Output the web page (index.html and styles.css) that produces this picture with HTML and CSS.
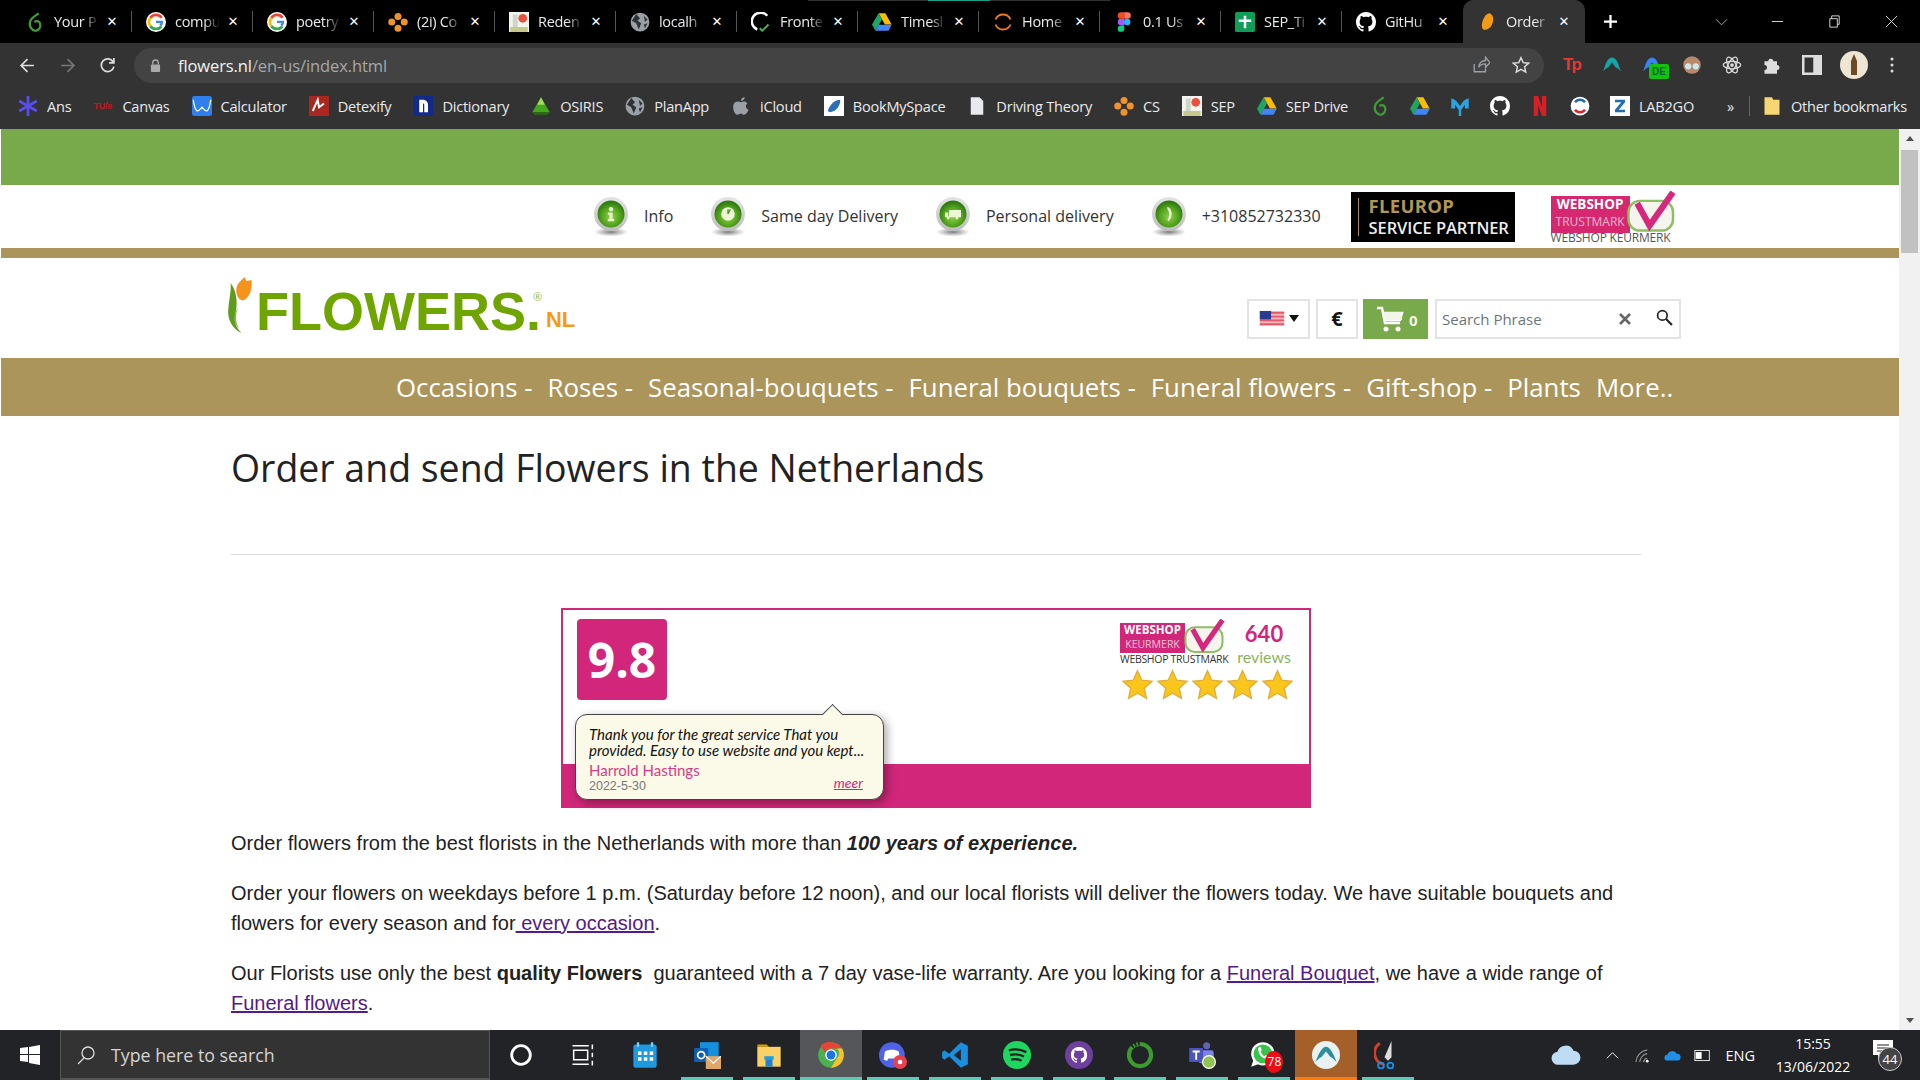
FILE: index.html
```html
<!DOCTYPE html>
<html lang="en">
<head>
    <meta charset="UTF-8">
    <meta name="viewport" content="width=device-width, initial-scale=1.0">
    <title>Order and send Flowers in the Netherlands</title>
    <link rel="stylesheet" href="styles.css">
</head>
<body>
    <svg class="defs" width="0" height="0">
        <defs>
            <radialGradient id="ball-green" cx="50%" cy="60%" r="55%"><stop offset="0" stop-color="#8fd04a"/><stop offset="0.6" stop-color="#55a51f"/><stop offset="1" stop-color="#2f7a12"/></radialGradient>
            <radialGradient id="ball-shadow" cx="50%" cy="50%" r="50%"><stop offset="0" stop-color="#7a7a7a"/><stop offset="1" stop-color="#8a8a8a" stop-opacity="0"/></radialGradient>
            <linearGradient id="ball-rim" x1="0" y1="0" x2="0" y2="1"><stop offset="0" stop-color="#e4e4e4"/><stop offset="1" stop-color="#bdbdbd"/></linearGradient>
        </defs>
        <symbol id="i-leaf-green" viewBox="0 0 16 16"><path d="M11 1C9 3 5 4 4 8c-1 4 2 7 4.500 7S13 12 12 9C11 7 9 7 7.500 8" fill="none" stroke="#3f9b34" stroke-width="1.800"/></symbol>
        <symbol id="i-google" viewBox="0 0 16 16"><circle cx="8" cy="8" r="8" fill="#fff"/><path d="M12.500 4.600A5.600 5.600 0 0 0 3.500 4.700" fill="none" stroke="#ea4335" stroke-width="2.200"/><path d="M3.500 4.700a5.600 5.600 0 0 0 0 6.600" fill="none" stroke="#fbbc05" stroke-width="2.200"/><path d="M3.500 11.300a5.600 5.600 0 0 0 8.800.3" fill="none" stroke="#34a853" stroke-width="2.200"/><path d="M8 7h5.600c.2 2-.3 3.500-1.300 4.600L10.700 10c.5-.4.800-.9.900-1.300H8z" fill="#4285f4"/></symbol>
        <symbol id="i-dots" viewBox="0 0 16 16"><g fill="#f0932b"><circle cx="8" cy="3.500" r="2.800"/><circle cx="3" cy="8" r="2.800"/><circle cx="13" cy="8" r="2.800"/><circle cx="8" cy="13" r="2.800"/></g></symbol>
        <symbol id="i-photo" viewBox="0 0 16 16"><rect width="16" height="16" fill="#f4f4ef"/><rect x="3" y="2" width="4" height="11" fill="#cfd6c9"/><circle cx="11" cy="5" r="3.500" fill="#e8503f"/><rect x="1" y="12" width="14" height="4" fill="#c4c98e"/></symbol>
        <symbol id="i-globe" viewBox="0 0 16 16"><circle cx="8" cy="8" r="7.500" fill="#9aa0a6"/><path d="M5 1.500 8 5 6 7 9 9 7 14 5 9 1.500 7zM11 3l3 3-2 2zM11 10l3-1-2 4z" fill="#303134"/></symbol>
        <symbol id="i-drive" viewBox="0 0 16 16"><path d="M5.300 1h5.400l5 9h-5.400z" fill="#fbbc05"/><path d="M5.300 1 0 10l2.700 5L8 6z" fill="#1fa463"/><path d="M5.300 10.200h10.400L13.200 15H2.800z" fill="#4285f4"/></symbol>
        <symbol id="i-github" viewBox="0 0 16 16"><path fill="#fff" d="M8 0C3.580 0 0 3.580 0 8c0 3.540 2.290 6.530 5.470 7.590.4.070.55-.17.55-.38 0-.19-.01-.82-.01-1.490-2.010.37-2.530-.49-2.690-.94-.09-.23-.48-.94-.82-1.130-.28-.15-.68-.52-.01-.53.63-.01 1.080.58 1.230.82.72 1.210 1.870.87 2.330.66.07-.52.28-.87.51-1.070-1.780-.2-3.640-.89-3.640-3.950 0-.87.31-1.590.82-2.150-.08-.2-.36-1.020.08-2.120 0 0 .67-.21 2.200.82.64-.18 1.320-.27 2-.27.68 0 1.360.09 2 .27 1.530-1.040 2.200-.82 2.200-.82.44 1.100.16 1.920.08 2.120.51.56.82 1.270.82 2.150 0 3.070-1.870 3.750-3.650 3.950.29.25.54.73.54 1.480 0 1.070-.01 1.930-.01 2.200 0 .21.15.46.55.38A8.013 8.013 0 0 0 16 8c0-4.420-3.580-8-8-8z"/></symbol>
        <symbol id="i-ci" viewBox="0 0 16 16"><path d="M13 3A7 7 0 1 0 5 14" fill="none" stroke="#fff" stroke-width="2"/><path d="M7 13l2 2 5-5" fill="none" stroke="#3fb950" stroke-width="1.500"/></symbol>
        <symbol id="i-arcs" viewBox="0 0 16 16"><path d="M2 6a6.500 6.500 0 0 1 12 0" fill="none" stroke="#f47b20" stroke-width="1.500"/><path d="M2 10a6.500 6.500 0 0 0 12 0" fill="none" stroke="#f47b20" stroke-width="1.500"/></symbol>
        <symbol id="i-figma" viewBox="0 0 16 16"><circle cx="10.500" cy="8" r="2.600" fill="#1abcfe"/><path d="M3 13.300A2.600 2.600 0 0 1 5.600 10.700h2.600v2.600a2.600 2.600 0 0 1-5.200 0z" fill="#0acf83"/><path d="M3 8a2.600 2.600 0 0 1 2.600-2.600h2.600v5.200H5.600A2.600 2.600 0 0 1 3 8z" fill="#a259ff"/><path d="M3 2.700A2.600 2.600 0 0 1 5.600.1h2.600v5.300H5.600A2.600 2.600 0 0 1 3 2.700z" fill="#f24e1e"/><path d="M8.200.1h2.600a2.600 2.600 0 0 1 0 5.300H8.200z" fill="#ff7262"/></symbol>
        <symbol id="i-sheets" viewBox="0 0 16 16"><rect width="16" height="16" rx="1.500" fill="#0f9d58"/><path d="M7 3h2v3h4v2H9v5H7V8H3V6h4z" fill="#fff"/></symbol>
        <symbol id="i-tulip" viewBox="0 0 16 16"><path d="M10 1c3 1 4 5 2 9-1 3-5 5-7 4-2-2-1-7 1-10 1-2 3-3 4-3z" fill="#f59a16"/></symbol>
        <symbol id="i-star" viewBox="0 0 24 24"><path d="M12 2l3 6.600 7.200.8-5.400 4.900 1.500 7.100L12 17.800 5.700 21.400l1.500-7.100L1.800 9.400 9 8.600z" fill="#fac61b" stroke="#e2ae3a" stroke-width="1"/></symbol>
        <symbol id="i-ball" viewBox="0 0 36 40"><ellipse cx="18" cy="35" rx="17" ry="4.500" fill="url(#ball-shadow)"/><circle cx="18" cy="17" r="17" fill="url(#ball-rim)"/><circle cx="18" cy="17" r="13.500" fill="url(#ball-green)"/></symbol>
        <symbol id="i-cart" viewBox="0 0 28 26"><path d="M1 2h5l3 15h15M7 7h19l-2 7H9" fill="none" stroke="#fff" stroke-width="2.500"/><path d="M8 6h18v8H9z" fill="#f2f6e8"/><circle cx="10" cy="23" r="2.500" fill="#fff"/><circle cx="22" cy="23" r="2.500" fill="#fff"/></symbol>
    </svg>

    <div class="tabbar">
        <div class="tab"><svg class="fav"><use href="#i-leaf-green"/></svg><span class="tab-title">Your P</span><span class="tab-x">&#10005;</span></div>
        <div class="tab"><svg class="fav"><use href="#i-google"/></svg><span class="tab-title">compu</span><span class="tab-x">&#10005;</span></div>
        <div class="tab"><svg class="fav"><use href="#i-google"/></svg><span class="tab-title">poetry</span><span class="tab-x">&#10005;</span></div>
        <div class="tab"><svg class="fav"><use href="#i-dots"/></svg><span class="tab-title">(2i) Co</span><span class="tab-x">&#10005;</span></div>
        <div class="tab"><svg class="fav"><use href="#i-photo"/></svg><span class="tab-title">Reden</span><span class="tab-x">&#10005;</span></div>
        <div class="tab"><svg class="fav"><use href="#i-globe"/></svg><span class="tab-title">localh</span><span class="tab-x">&#10005;</span></div>
        <div class="tab"><svg class="fav"><use href="#i-ci"/></svg><span class="tab-title">Fronte</span><span class="tab-x">&#10005;</span></div>
        <div class="tab"><svg class="fav"><use href="#i-drive"/></svg><span class="tab-title">Timesl</span><span class="tab-x">&#10005;</span></div>
        <div class="tab"><svg class="fav"><use href="#i-arcs"/></svg><span class="tab-title">Home</span><span class="tab-x">&#10005;</span></div>
        <div class="tab"><svg class="fav"><use href="#i-figma"/></svg><span class="tab-title">0.1 Us</span><span class="tab-x">&#10005;</span></div>
        <div class="tab"><svg class="fav"><use href="#i-sheets"/></svg><span class="tab-title">SEP_Ti</span><span class="tab-x">&#10005;</span></div>
        <div class="tab tab-last"><svg class="fav"><use href="#i-github"/></svg><span class="tab-title">GitHu</span><span class="tab-x">&#10005;</span></div>
        <div class="tab tab-active"><svg class="fav"><use href="#i-tulip"/></svg><span class="tab-title">Order</span><span class="tab-x">&#10005;</span></div>
        <svg class="new-tab" viewBox="0 0 16 16"><path d="M8 1v14M1 8h14" stroke="#fff" stroke-width="2.400"/></svg>
        <div class="win-controls">
            <svg class="win-chevron" viewBox="0 0 14 8"><path d="M1 1l6 6 6-6" fill="none" stroke="#aaa"/></svg>
            <svg class="win-btn" viewBox="0 0 16 16"><path d="M2 8h12" stroke="#ddd"/></svg>
            <svg class="win-btn" viewBox="0 0 16 16"><path d="M3 5h8v9H3zM5 5V2h8v9h-2" fill="none" stroke="#ddd"/></svg>
            <svg class="win-btn" viewBox="0 0 16 16"><path d="M2 2l12 12M14 2L2 14" stroke="#ddd"/></svg>
        </div>
    </div>

    <div class="toolbar">
        <svg class="nav-icon" viewBox="0 0 16 16"><path d="M14 8H2M8 2L2 8l6 6" fill="none" stroke="#ddd" stroke-width="1.600"/></svg>
        <svg class="nav-icon" viewBox="0 0 16 16"><path d="M2 8h12M8 2l6 6-6 6" fill="none" stroke="#777" stroke-width="1.600"/></svg>
        <svg class="nav-icon" viewBox="0 0 16 16"><path d="M13.500 5A6 6 0 1 0 14 9M14 1v4.500H9.500" fill="none" stroke="#ddd" stroke-width="1.600"/></svg>
        <div class="omnibox">
            <svg class="lock" viewBox="0 0 12 14"><path d="M3 6V4a3 3 0 0 1 6 0v2" fill="none" stroke="#aaa" stroke-width="1.400"/><rect x="1" y="6" width="10" height="8" rx="1" fill="#aaa"/></svg>
            <span class="url">flowers.nl<span class="url-path">/en-us/index.html</span></span>
            <svg class="omni-icon" viewBox="0 0 16 16"><path d="M2 7v7h10v-3M6 10c0-4 3-6 6-6V1l4 5-4 4V7c-3 0-5 1-6 3z" fill="none" stroke="#9aa0a6" stroke-width="1.200"/></svg>
            <svg class="omni-icon" viewBox="0 0 16 16"><path d="M8 1.500l2 4.400 4.800.5-3.600 3.200 1 4.700L8 11.900l-4.200 2.400 1-4.700L1.200 6.400 6 5.900z" fill="none" stroke="#ddd" stroke-width="1.300"/></svg>
        </div>
        <div class="extensions">
            <span class="ext-tp">Tp</span>
            <svg class="ext" viewBox="0 0 16 16"><path d="M1 13C3 6 5 2 8 2s5 4 7 11c-2-2-3-3-4-3L8 6l-3 4c-1 0-2 1-4 3z" fill="#18a5a7"/></svg>
            <span class="ext-wrap"><svg class="ext" viewBox="0 0 16 16"><path d="M1 13C3 6 5 2 8 2s5 4 7 11c-2-2-3-3-4-3L8 6l-3 4c-1 0-2 1-4 3z" fill="#3b82f6"/></svg><span class="ext-de">DE</span></span>
            <svg class="ext" viewBox="0 0 16 16"><circle cx="8" cy="8" r="7" fill="#b78a6b"/><circle cx="5" cy="9" r="2.500" fill="#cfe7ea"/><circle cx="11" cy="9" r="2.500" fill="#cfe7ea"/></svg>
            <svg class="ext" viewBox="0 0 16 16"><g fill="none" stroke="#ddd"><ellipse cx="8" cy="8" rx="7" ry="3"/><ellipse cx="8" cy="8" rx="7" ry="3" transform="rotate(60 8 8)"/><ellipse cx="8" cy="8" rx="7" ry="3" transform="rotate(120 8 8)"/></g><circle cx="8" cy="8" r="1.500" fill="#ddd"/></svg>
            <svg class="ext" viewBox="0 0 16 16"><path d="M2 5h3a2 2 0 1 1 4 0h3v3a2 2 0 1 1 0 4v3H2v-3a2 2 0 1 0 0-4z" fill="#ddd"/></svg>
            <svg class="ext" viewBox="0 0 16 16"><path d="M1 1h14v14H1z" fill="none" stroke="#ddd" stroke-width="2"/><rect x="9" y="1" width="6" height="14" fill="#ddd"/></svg>
            <svg class="avatar" viewBox="0 0 28 28"><circle cx="14" cy="14" r="14" fill="#eee6d2"/><path d="M11 24V10l3-7 3 7v14z" fill="#6b4a2a"/></svg>
            <svg class="ext-menu" viewBox="0 0 4 16"><g fill="#ddd"><circle cx="2" cy="2" r="1.500"/><circle cx="2" cy="8" r="1.500"/><circle cx="2" cy="14" r="1.500"/></g></svg>
        </div>
    </div>

    <div class="bookmarks">
        <span class="bm"><svg class="fav" viewBox="0 0 16 16"><path d="M8 0v16M1 4l14 8M15 4L1 12" stroke="#5a4df0" stroke-width="2.200"/></svg>Ans</span>
        <span class="bm"><span class="bm-tue">TU/e</span>Canvas</span>
        <span class="bm"><svg class="fav" viewBox="0 0 16 16"><rect width="16" height="16" rx="2" fill="#2f80ed"/><path d="M1 3c2 14 5 8 7 6 2 2 5 8 7-6" fill="none" stroke="#fff"/></svg>Calculator</span>
        <span class="bm"><svg class="fav" viewBox="0 0 16 16"><rect width="16" height="16" fill="#a8281f"/><path d="M3 12l4-9 1 6 4-3" fill="none" stroke="#fff" stroke-width="1.500"/></svg>Detexify</span>
        <span class="bm"><svg class="fav" viewBox="0 0 16 16"><rect width="16" height="16" fill="#122a8a"/><path d="M5 3h3a4 4 0 0 1 4 4v6H9V7a1 1 0 0 0-1-1v7H5z" fill="#fff"/></svg>Dictionary</span>
        <span class="bm"><svg class="fav" viewBox="0 0 16 16"><path d="M8 1l7 12H1z" fill="#43a81c"/><path d="M8 1l3 6H5z" fill="#9fdc5a"/><path d="M1 13h14l-2 2H3z" fill="#2a6d10"/></svg>OSIRIS</span>
        <span class="bm"><svg class="fav"><use href="#i-globe"/></svg>PlanApp</span>
        <span class="bm"><svg class="fav" viewBox="0 0 16 16"><path d="M11 1c0 2-2 3-3 3 0-2 1-3 3-3zM8 5c2-1 4-1 5 1-2 2-1 4 1 5-1 3-3 4-4 4s-1-1-2-1-2 1-3 1c-2 0-4-5-3-8 1-3 4-3 6-2z" fill="#9aa0a6"/></svg>iCloud</span>
        <span class="bm"><svg class="fav" viewBox="0 0 16 16"><rect width="16" height="16" fill="#fff"/><path d="M3 12C5 6 9 3 13 3c0 5-3 9-8 10z" fill="#2d6fb5"/></svg>BookMySpace</span>
        <span class="bm"><svg class="fav" viewBox="0 0 16 16"><path d="M3 1h7l3 3v11H3z" fill="#e8eaed"/></svg>Driving Theory</span>
        <span class="bm"><svg class="fav"><use href="#i-dots"/></svg>CS</span>
        <span class="bm"><svg class="fav"><use href="#i-photo"/></svg>SEP</span>
        <span class="bm"><svg class="fav"><use href="#i-drive"/></svg>SEP Drive</span>
        <span class="bm bm-icon"><svg class="fav"><use href="#i-leaf-green"/></svg></span>
        <span class="bm bm-icon"><svg class="fav"><use href="#i-drive"/></svg></span>
        <span class="bm bm-icon"><svg class="fav" viewBox="0 0 16 16"><path d="M1 2c3 0 5 3 7 6 2-3 4-6 7-6v8h-3V7l-3 4v5H7v-5L4 7v3H1z" fill="#2aa3e0"/></svg></span>
        <span class="bm bm-icon"><svg class="fav"><use href="#i-github"/></svg></span>
        <span class="bm bm-icon"><svg class="fav" viewBox="0 0 16 16"><path d="M3 0h3.500l3 9V0H13v16c-1 0-2.500 0-3.500-.3L6.500 7v8.700L3 16z" fill="#d81f26"/></svg></span>
        <span class="bm bm-icon"><svg class="fav" viewBox="0 0 16 16"><circle cx="8" cy="8" r="7.500" fill="#fff"/><path d="M4 5a5 5 0 0 1 8 0" fill="none" stroke="#2368b5" stroke-width="2"/><path d="M12 11a5 5 0 0 1-8 0" fill="none" stroke="#d8232a" stroke-width="2"/></svg></span>
        <span class="bm bm-lab"><svg class="fav" viewBox="0 0 16 16"><rect width="16" height="16" fill="#fff"/><path d="M4 3h8v2L7 11h5v2H4v-2l5-6H4z" fill="#1f6fb5"/></svg>LAB2GO</span>
        <span class="bm-more">&raquo;</span>
        <span class="bm-sep"></span>
        <span class="bm bm-other"><svg class="fav" viewBox="0 0 16 16"><path d="M2 1h6l1 2h5v12H2z" fill="#f7d774"/></svg>Other bookmarks</span>
    </div>

    <div class="viewport">
        <div class="page">
            <div class="green-bar"></div>
            <div class="info-row">
                <span class="info-item">
                    <span class="ball-wrap"><svg class="ball"><use href="#i-ball"/></svg><svg class="ball-glyph" viewBox="0 0 20 20"><circle cx="10" cy="4" r="2.800" fill="#e6f3c8"/><path d="M6 8h6v8h2v3H6v-3h2v-5H6z" fill="#e6f3c8"/></svg></span>
                    Info
                </span>
                <span class="info-item">
                    <span class="ball-wrap"><svg class="ball"><use href="#i-ball"/></svg><svg class="ball-glyph" viewBox="0 0 20 20"><circle cx="10" cy="10" r="8.500" fill="#eef6d8"/><path d="M10 10V4M10 10l3-6" stroke="#4f9c22" stroke-width="1.800" fill="none"/></svg></span>
                    Same day Delivery
                </span>
                <span class="info-item">
                    <span class="ball-wrap"><svg class="ball"><use href="#i-ball"/></svg><svg class="ball-glyph" viewBox="0 0 20 20"><path d="M5 5h15v9H5zM0 8h4v6H0z" fill="#eef6d8"/><circle cx="4" cy="15" r="1.800" fill="#eef6d8"/><circle cx="15" cy="15" r="1.800" fill="#eef6d8"/></svg></span>
                    Personal delivery
                </span>
                <span class="info-item">
                    <span class="ball-wrap"><svg class="ball"><use href="#i-ball"/></svg><svg class="ball-glyph" viewBox="0 0 20 20"><path d="M8 1c6 2 8 13 1 18l-1-2c3-3 3-10 0-13z" fill="#eef6d8"/></svg></span>
                    +310852732330
                </span>
                <div class="fleurop">
                    <span class="fleurop-top">FLEUROP</span>
                    <span class="fleurop-bottom">SERVICE PARTNER</span>
                </div>
                <div class="trustmark">
                    <div class="trustmark-top">
                        <div class="trustmark-pink"><b>WEBSHOP</b><span>TRUSTMARK</span></div>
                        <svg class="trustmark-check" viewBox="0 0 40 34"><rect x="1" y="8" width="36" height="24" rx="9" fill="#f5f5ee" stroke="#8cc063" stroke-width="2"/><path d="M8 10l10 18L37 1" fill="none" stroke="#d5287c" stroke-width="5"/></svg>
                    </div>
                    <div class="trustmark-bottom">WEBSHOP KEURMERK</div>
                </div>
            </div>
            <div class="gold-line"></div>

            <header class="site-header">
                <div class="logo">
                    <svg class="tulip" viewBox="0 0 26 58"><path d="M4 6c5 6 8 18 5 30-2 8 0 14 6 20C6 52 0 42 2 30 3 20 5 12 4 6z" fill="#5f9c1e"/><path d="M12 30c-4 8-3 16 1 22-6-5-7-14-1-22z" fill="#7fb63e"/><path d="M13 5l5-5 2 4 5-1c1 8-1 16-7 20-4 1-7-2-8-7-1-4 1-9 3-11z" fill="#f6931d"/></svg>
                    <span class="logo-text">FLOWERS.</span>
                    <span class="logo-reg">&reg;</span>
                    <span class="logo-nl">NL</span>
                </div>
                <div class="shop-tools">
                    <span class="tool tool-flag">
                        <svg class="flag" viewBox="0 0 26 16"><rect width="26" height="16" fill="#f4b5bd"/><path d="M0 2h26M0 6h26M0 10h26M0 14h26" stroke="#e25a68" stroke-width="2"/><rect width="12" height="9" fill="#2a3a8f"/></svg>
                        <span class="caret"></span>
                    </span>
                    <span class="tool tool-euro">&euro;</span>
                    <span class="tool-cart"><svg class="cart"><use href="#i-cart"/></svg><span class="cart-count">0</span></span>
                    <div class="search">
                        <span class="search-text">Search Phrase</span>
                        <svg class="search-x" viewBox="0 0 14 14"><path d="M2 2l10 10M12 2L2 12" stroke="#666" stroke-width="2.600"/></svg>
                        <svg class="search-go" viewBox="0 0 16 16"><circle cx="6" cy="6" r="4.500" fill="none" stroke="#222" stroke-width="1.600"/><path d="M9.500 9.500L15 15" stroke="#222" stroke-width="2"/></svg>
                    </div>
                </div>
            </header>

            <nav class="main-nav">
                <a>Occasions -</a>
                <a>Roses -</a>
                <a>Seasonal-bouquets -</a>
                <a>Funeral bouquets -</a>
                <a>Funeral flowers -</a>
                <a>Gift-shop -</a>
                <a>Plants</a>
                <a>More..</a>
            </nav>

            <main class="content">
                <h1>Order and send Flowers in the Netherlands</h1>
                <hr>
                <div class="rating">
                    <div class="rating-top">
                        <div class="score">9.8</div>
                        <div class="rating-side">
                            <div class="rating-brand">
                                <div class="keurmerk">
                                    <div class="keurmerk-top">
                                        <div class="keurmerk-pink"><b>WEBSHOP</b><span>KEURMERK</span></div>
                                        <svg class="keurmerk-check" viewBox="0 0 40 34"><rect x="1" y="8" width="36" height="24" rx="9" fill="#f5f5ee" stroke="#8cc063" stroke-width="2"/><path d="M8 10l10 18L37 1" fill="none" stroke="#d5287c" stroke-width="5"/></svg>
                                    </div>
                                    <div class="keurmerk-bottom">WEBSHOP TRUSTMARK</div>
                                </div>
                                <div class="review-count"><b>640</b><span>reviews</span></div>
                            </div>
                            <div class="stars">
                                <svg class="star"><use href="#i-star"/></svg>
                                <svg class="star"><use href="#i-star"/></svg>
                                <svg class="star"><use href="#i-star"/></svg>
                                <svg class="star"><use href="#i-star"/></svg>
                                <svg class="star"><use href="#i-star"/></svg>
                            </div>
                        </div>
                    </div>
                    <div class="rating-band"></div>
                    <div class="bubble">
                        <p class="bubble-text">Thank you for the great service That you provided. Easy to use website and you kept...</p>
                        <div class="bubble-name">Harrold Hastings</div>
                        <div class="bubble-foot"><span class="bubble-date">2022-5-30</span><a>meer</a></div>
                    </div>
                </div>
                <p>Order flowers from the best florists in the Netherlands with more than <b><i>100 years of experience.</i></b></p>
                <p>Order your flowers on weekdays before 1 p.m. (Saturday before 12 noon), and our local florists will deliver the flowers today. We have suitable bouquets and flowers for every season and for<a> every occasion</a>.</p>
                <p>Our Florists use only the best <b>quality Flowers</b>&nbsp; guaranteed with a 7 day vase-life warranty. Are you looking for a <a>Funeral Bouquet</a>, we have a wide range of <a>Funeral flowers</a>.</p>
            </main>
        </div>
        <div class="scrollbar">
            <span class="scroll-up"></span>
            <div class="scroll-track"><div class="scroll-thumb"></div></div>
            <span class="scroll-down"></span>
        </div>
    </div>

    <footer class="taskbar">
        <div class="start"><svg class="win-logo" viewBox="0 0 20 20"><path d="M0 3l8-1v7H0zM9 2l11-2v9H9zM0 10h8v7l-8-1zM9 10h11v10L9 18z" fill="#fff"/></svg></div>
        <div class="task-search">
            <svg class="task-search-icon" viewBox="0 0 20 20"><circle cx="12" cy="8" r="6" fill="none" stroke="#ddd" stroke-width="1.300"/><path d="M8 13L2 19" stroke="#ddd" stroke-width="1.300"/></svg>
            <span>Type here to search</span>
        </div>
        <div class="task-app"><svg class="task-icon" viewBox="0 0 24 24"><circle cx="12" cy="12" r="8" fill="none" stroke="#fff" stroke-width="2.400"/></svg></div>
        <div class="task-app"><svg class="task-icon" viewBox="0 0 24 24"><path d="M3 4h14M3 20h14M4 8h12v8H4zM20 3v4M20 10v4M20 17v4" fill="none" stroke="#fff" stroke-width="1.300"/></svg></div>
        <div class="task-app"><svg class="task-icon" viewBox="0 0 24 24"><rect x="2" y="3" width="20" height="20" rx="2" fill="#1f9ae0"/><path d="M6 1v4M18 1v4" stroke="#7fd0f5" stroke-width="2"/><path d="M6 9h3v3H6zM11 9h3v3h-3zM16 9h3v3h-3zM6 14h3v3H6zM11 14h3v3h-3zM16 14h3v3h-3z" fill="#fff"/></svg></div>
        <div class="task-app is-open"><svg class="task-icon" viewBox="0 0 24 24"><rect x="6" y="1" width="16" height="17" fill="#1490df"/><rect x="1" y="6" width="12" height="12" rx="1" fill="#0f5fb5"/><circle cx="7" cy="12" r="3" fill="none" stroke="#fff" stroke-width="1.500"/><rect x="11" y="13" width="13" height="11" fill="#dfa868"/><path d="M11 13l6.500 6 6.500-6" fill="none" stroke="#fff"/></svg></div>
        <div class="task-app is-open"><svg class="task-icon" viewBox="0 0 24 24"><path d="M2 3h8l2 2H2z" fill="#e0a100"/><rect x="2" y="5" width="20" height="17" fill="#fad165"/><rect x="9" y="15" width="6" height="7" fill="#1f7fd0"/><path d="M8 13h8v3H8z" fill="#2a9be0"/></svg></div>
        <div class="task-app is-open is-current"><svg class="task-icon" viewBox="0 0 24 24"><circle cx="12" cy="12" r="11" fill="#4caf50"/><path d="M12 1a11 11 0 0 1 9.500 5.500H12A5.500 5.500 0 0 0 7 10L3 4a11 11 0 0 1 9-3z" fill="#ea4335"/><path d="M21.500 6.500A11 11 0 0 1 12 23l5-8a5.500 5.500 0 0 0 0-8.500z" fill="#fbc02d"/><circle cx="12" cy="12" r="5" fill="#fff"/><circle cx="12" cy="12" r="3.800" fill="#1a73e8"/></svg></div>
        <div class="task-app is-open"><svg class="task-icon" viewBox="0 0 24 24"><circle cx="11" cy="12" r="11" fill="#4f62e8"/><path d="M5 9c3-2 9-2 12 0l1 7-3 1-1-2H8l-1 2-3-1z" fill="#fff"/><circle cx="18" cy="18" r="6" fill="#e8414e"/><circle cx="18" cy="18" r="2" fill="#fff"/></svg></div>
        <div class="task-app is-open"><svg class="task-icon" viewBox="0 0 24 24"><path d="M17 1L7 11 3 8 1 9.500v5L3 16l4-3 10 10 6-3V4zM17 7v10l-6-5z" fill="#1a8fe0"/></svg></div>
        <div class="task-app is-open"><svg class="task-icon" viewBox="0 0 24 24"><circle cx="12" cy="12" r="12" fill="#1ed760"/><path d="M5 8c5-1.500 10-1 15 1.500M6 12c4-1 8-.8 12 1.300M7 16c3-.8 6-.6 9 1" fill="none" stroke="#222" stroke-width="2"/></svg></div>
        <div class="task-app is-open"><svg class="task-icon" viewBox="0 0 24 24"><circle cx="12" cy="12" r="12" fill="#6e3f9e"/><svg x="5" y="5" width="14" height="14" viewBox="0 0 16 16"><use href="#i-github"/></svg></svg></div>
        <div class="task-app is-open"><svg class="task-icon" viewBox="0 0 24 24"><circle cx="12" cy="12" r="9.500" fill="none" stroke="#3c9a2e" stroke-width="3.500"/><path d="M5 5a10 10 0 0 1 7-3" fill="none" stroke="#212326" stroke-width="3.500" stroke-dasharray="1.500 1.500"/></svg></div>
        <div class="task-app is-open"><svg class="task-icon" viewBox="0 0 24 24"><circle cx="16" cy="4" r="3" fill="#6264a7"/><rect x="9" y="8" width="13" height="11" rx="2" fill="#7b83eb"/><rect x="1" y="6" width="12" height="12" rx="1" fill="#4b53bc"/><path d="M4 9h6M7 9v7" stroke="#fff" stroke-width="1.600"/><circle cx="18" cy="18" r="5.500" fill="#92c353" stroke="#fff"/></svg></div>
        <div class="task-app is-open">
            <svg class="task-icon" viewBox="0 0 24 24"><circle cx="11" cy="11" r="10" fill="#fff"/><circle cx="11" cy="11" r="8" fill="#3ac34c"/><path d="M1 22l2-6 4 4z" fill="#fff"/><path d="M7 6c0 6 4 10 9 9l-2-3-2 1c-1-1-2-2-3-4l1-1-1-3z" fill="#fff"/></svg>
            <span class="task-badge">78</span>
        </div>
        <div class="task-app is-nord"><svg class="task-icon" viewBox="0 0 24 24"><circle cx="12" cy="12" r="12" fill="#e9f2f3"/><path d="M3 18C6 10 9 5 12 5s6 5 9 13c-3-3-4-4-5-4l-4-5-4 5c-1 0-2 1-5 4z" fill="#2c8d9b"/></svg></div>
        <div class="task-app is-open"><svg class="task-icon" viewBox="0 0 24 24"><path d="M5 2a10 10 0 0 0 3 18" fill="none" stroke="#d0412d" stroke-width="2.500"/><path d="M9 14L15 0v14l-3 3z" fill="#ddd"/><circle cx="6" cy="21" r="2.500" fill="none" stroke="#1b8fe0" stroke-width="1.600"/><circle cx="14" cy="21" r="2.500" fill="none" stroke="#1b8fe0" stroke-width="1.600"/></svg></div>

        <div class="tray">
            <svg class="tray-cloud" viewBox="0 0 28 20"><path d="M7 19a6 6 0 0 1-1-12 8 8 0 0 1 15-1 6.500 6.500 0 0 1 0 13z" fill="#bfdcf5"/></svg>
            <svg class="tray-icon" viewBox="0 0 16 16"><path d="M2 11l6-6 6 6" fill="none" stroke="#fff"/></svg>
            <svg class="tray-icon" viewBox="0 0 16 16"><path d="M1 15a14 14 0 0 1 12-13M5 15a10 10 0 0 1 8-9M9 15a5 5 0 0 1 4-4" fill="none" stroke="#999" stroke-width="1.200"/><circle cx="13" cy="14" r="1.500" fill="#fff"/></svg>
            <svg class="tray-icon" viewBox="0 0 20 14"><path d="M4 13a3.500 3.500 0 0 1 0-7 6 6 0 0 1 11-1 4 4 0 0 1 1 8z" fill="#1f8fe8"/></svg>
            <svg class="tray-icon" viewBox="0 0 20 14"><rect x="1" y="1" width="17" height="12" fill="none" stroke="#fff"/><rect x="2" y="3" width="7" height="8" fill="#fff"/></svg>
            <span class="tray-lang">ENG</span>
            <div class="tray-clock"><span>15:55</span><span>13/06/2022</span></div>
            <div class="tray-notify">
                <svg class="tray-note" viewBox="0 0 20 20"><path d="M0 0h20v15H9l-4 5v-5H0z" fill="#fff"/><path d="M4 5h12M4 8h12M4 11h8" stroke="#222"/></svg>
                <span class="tray-count">44</span>
            </div>
        </div>
    </footer>
</body>
</html>
```
FILE: styles.css
```css
html, body {
    margin: 0;
    height: 1080px;
    overflow: hidden;
}
body {
    display: flex;
    flex-direction: column;
    width: 1920px;
    background-color: #fff;
    font-family: "Open Sans", sans-serif;
}
.defs {
    position: absolute;
}
svg {
    display: block;
    flex: none;
}
.fav {
    width: 20px;
    height: 20px;
}

/* browser tabs */
.tabbar {
    display: flex;
    align-items: center;
    height: 43px;
    padding-left: 11px;
    background: #000 linear-gradient(90deg, #333 0 120px, #14a085 120px 182px, #333 182px) 808px 0 / 302px 1px no-repeat;
    color: #e8eaed;
    flex: none;
}
.tab {
    display: flex;
    align-items: center;
    width: 121px;
    height: 43px;
    box-sizing: border-box;
    padding-left: 14px;
    font-size: 14.500px;
    background: linear-gradient(#555, #555) right 11px / 1px 21px no-repeat;
}
.tab-last {
    background: none;
}
.tab-active {
    background: #333;
    border-radius: 10px 10px 0 0;
    width: 122px;
}
.tab-title {
    width: 45px;
    margin-left: 9px;
    overflow: hidden;
    white-space: nowrap;
    letter-spacing: -0.3px;
    -webkit-mask-image: linear-gradient(90deg, #000 65%, transparent);
    mask-image: linear-gradient(90deg, #000 65%, transparent);
}
.tab-x {
    width: 26px;
    text-align: center;
    font-size: 13px;
    font-weight: 700;
    color: #fff;
    font-family: "DejaVu Sans", sans-serif;
}
.new-tab {
    width: 15px;
    height: 15px;
    margin-left: 18px;
}
.win-controls {
    display: flex;
    align-items: center;
    margin-left: auto;
    padding-right: 21px;
}
.win-chevron {
    width: 13px;
    height: 8px;
}
.win-btn {
    width: 15px;
    height: 15px;
    margin-left: 42px;
}

/* address bar */
.toolbar {
    display: flex;
    align-items: center;
    height: 44px;
    padding-left: 19px;
    background-color: #333;
    flex: none;
}
.nav-icon {
    width: 17px;
    height: 17px;
    margin-right: 23px;
}
.omnibox {
    display: flex;
    align-items: center;
    width: 1410px;
    height: 35px;
    margin-left: -5px;
    padding: 0 14px 0 16px;
    box-sizing: border-box;
    border-radius: 18px;
    background-color: #434343;
}
.lock {
    width: 11px;
    height: 13px;
    margin-right: 17px;
}
.url {
    flex: 1;
    font-size: 16.500px;
    color: #f1f3f4;
    letter-spacing: -0.1px;
}
.url-path {
    color: #a6a8ab;
}
.omni-icon {
    width: 18px;
    height: 18px;
    margin-left: 22px;
}
.extensions {
    display: flex;
    align-items: center;
    margin-left: 19px;
}
.ext-tp {
    width: 20px;
    font: bold 17px "Liberation Sans", sans-serif;
    letter-spacing: -2px;
    color: #e53935;
    margin-right: 19px;
}
.ext {
    width: 20px;
    height: 20px;
    margin-right: 20px;
}
.ext-wrap {
    position: relative;
    display: block;
    width: 20px;
    height: 20px;
    margin-right: 20px;
}
.ext-de {
    position: absolute;
    left: 7px;
    top: 9px;
    width: 20px;
    height: 15px;
    text-align: center;
    font: bold 10px/15px "Liberation Sans", sans-serif;
    background-color: #12c20f;
    color: #063;
    border-radius: 2px;
}
.avatar {
    width: 28px;
    height: 28px;
    margin-left: -2px;
    margin-right: 22px;
}
.ext-menu {
    width: 4px;
    height: 16px;
}

/* bookmarks */
.bookmarks {
    display: flex;
    align-items: center;
    height: 42px;
    padding: 0 13px 4px 18px;
    box-sizing: border-box;
    background-color: #333;
    color: #e8eaed;
    font-size: 14.600px;
    letter-spacing: -0.25px;
    flex: none;
}
.bm {
    display: flex;
    align-items: center;
    gap: 9px;
    margin-right: 22px;
    white-space: nowrap;
}
.bm-icon {
    margin-right: 20px;
}
.bm-lab {
    margin-right: 0;
}
.bm-tue {
    width: 20px;
    font: bold 9px "Liberation Sans", sans-serif;
    color: #c4161c;
}
.bm-more {
    margin-left: auto;
    margin-right: 15px;
}
.bm-sep {
    width: 1px;
    height: 20px;
    margin-right: 12px;
    background-color: #666;
}
.bm-other {
    margin-right: 0;
}

/* the page */
.viewport {
    display: flex;
    height: 901px;
    flex: none;
}
.page {
    flex: 1;
    overflow: hidden;
    padding-left: 1px;
    min-width: 0;
}
.green-bar {
    height: 56px;
    background-color: #78a94a;
}
.info-row {
    display: flex;
    align-items: center;
    height: 63px;
    padding-left: 592px;
    font-size: 16px;
    color: #333;
}
.info-item {
    display: flex;
    align-items: center;
    gap: 15px;
    margin-right: 37px;
    margin-top: -2px;
    white-space: nowrap;
}
.ball-wrap {
    position: relative;
    display: block;
    width: 36px;
    height: 40px;
    margin-top: 2px;
}
.ball {
    width: 36px;
    height: 40px;
}
.ball-glyph {
    position: absolute;
    left: 10px;
    top: 8px;
    width: 16px;
    height: 18px;
}
.fleurop {
    display: flex;
    flex-direction: column;
    justify-content: center;
    width: 164px;
    height: 50px;
    margin-left: -7px;
    padding-left: 18px;
    box-sizing: border-box;
    background: #000 linear-gradient(#a98c4b, #a98c4b) 7px 6px / 1px 38px no-repeat;
    line-height: 22px;
    font-weight: 700;
    font-size: 16.500px;
    white-space: nowrap;
}
.fleurop-top {
    font-size: 18.500px;
    letter-spacing: 0.3px;
    color: #b29655;
}
.fleurop-bottom {
    color: #eee;
    font-weight: 600;
    letter-spacing: -0.1px;
}
.trustmark {
    width: 126px;
    margin-left: 36px;
}
.trustmark-top {
    display: flex;
    align-items: flex-start;
}
.trustmark-pink {
    display: flex;
    flex-direction: column;
    align-items: center;
    width: 79px;
    height: 37px;
    margin-top: 5px;
    box-sizing: border-box;
    background-color: #d5286f;
    color: #fff;
    font-size: 12px;
    line-height: 17px;
}
.trustmark-pink b {
    font-size: 13.500px;
}
.trustmark-pink span {
    color: #f3b4cf;
}
.trustmark-check {
    width: 50px;
    height: 42px;
    margin-left: -3px;
}
.trustmark-bottom {
    font-size: 12px;
    line-height: 10px;
    color: #555;
    white-space: nowrap;
    letter-spacing: -0.2px;
}
.gold-line {
    height: 10px;
    background-color: #ab955b;
}

.site-header {
    display: flex;
    align-items: center;
    height: 100px;
    padding-left: 225px;
}
.logo {
    display: flex;
    align-items: flex-end;
    position: relative;
    width: 350px;
    height: 60px;
    margin-top: 2px;
}
.tulip {
    width: 27px;
    height: 58px;
    margin-right: 3px;
    margin-bottom: 4px;
}
.logo-text {
    font: bold 54px/56px "Liberation Sans", sans-serif;
    color: #6fa500;
}
.logo-reg {
    position: absolute;
    left: 307px;
    top: 10px;
    font-size: 11px;
    color: #8fbc55;
}
.logo-nl {
    margin-left: 5px;
    margin-bottom: 5px;
    font: bold 22px/28px "Liberation Sans", sans-serif;
    color: #f59a16;
}
.shop-tools {
    display: flex;
    margin-left: 671px;
    margin-top: 21px;
}
.tool {
    display: flex;
    align-items: center;
    justify-content: center;
    height: 40px;
    box-sizing: border-box;
    border: 2px solid #e3e3e3;
    color: #111;
}
.tool-flag {
    width: 63px;
    gap: 4px;
}
.flag {
    width: 26px;
    height: 15px;
}
.caret {
    width: 0;
    height: 0;
    border: 5.500px solid transparent;
    border-top: 7px solid #111;
    border-bottom: 0;
}
.tool-euro {
    width: 42px;
    margin-left: 6px;
    font-size: 20px;
    font-weight: 700;
}
.tool-cart {
    display: flex;
    align-items: center;
    width: 65px;
    height: 40px;
    margin-left: 5px;
    padding-left: 13px;
    box-sizing: border-box;
    background-color: #78a94a;
    color: #f3f6e6;
    font-size: 15px;
    font-weight: 700;
}
.cart {
    width: 28px;
    height: 26px;
}
.cart-count {
    margin-left: 5px;
    margin-top: 3px;
}
.search {
    display: flex;
    align-items: center;
    width: 246px;
    height: 40px;
    margin-left: 7px;
    padding: 0 6px 0 5px;
    box-sizing: border-box;
    border: 2px solid #e3e3e3;
    font-size: 15px;
    color: #6c757d;
}
.search-text {
    flex: 1;
}
.search-x {
    width: 14px;
    height: 14px;
    margin-right: 24px;
}
.search-go {
    width: 17px;
    height: 17px;
    margin-top: -3px;
}

.main-nav {
    display: flex;
    align-items: center;
    gap: 15px;
    height: 58px;
    padding-left: 395px;
    background-color: #ab955b;
    color: #fff;
    font-size: 25.800px;
    white-space: nowrap;
}

.content {
    width: 1410px;
    margin-left: 230px;
    font: 20px/30px "Liberation Sans", sans-serif;
    color: #222;
}
.content h1 {
    margin: 26px 0 0;
    font: 400 37.450px/52px "Open Sans", sans-serif;
    color: #222;
}
.content hr {
    height: 1px;
    margin: 60px 0 53px;
    border: 0;
    background-color: #ddd;
}
.content p {
    margin: 0 0 20px;
}
.content a {
    color: #551a8b;
    text-decoration: underline;
}

/* rating widget */
.rating {
    position: relative;
    width: 750px;
    height: 200px;
    margin: 0 auto 20px;
    box-sizing: border-box;
    border: 2px solid #d2267a;
    display: flex;
    flex-direction: column;
    font-family: Lato, sans-serif;
}
.rating-top {
    display: flex;
    justify-content: space-between;
    flex: 1;
    padding: 9px 14px 0 14px;
}
.score {
    width: 90px;
    height: 81px;
    border-radius: 4px;
    background-color: #d2267a;
    color: #fff;
    text-align: center;
    font: 700 48px/81px "Open Sans", sans-serif;
}
.rating-brand {
    display: flex;
    gap: 9px;
}
.keurmerk {
    width: 108px;
}
.keurmerk-top {
    display: flex;
    align-items: flex-start;
}
.keurmerk-pink {
    display: flex;
    flex-direction: column;
    align-items: center;
    width: 65px;
    height: 30px;
    margin-top: 4px;
    box-sizing: border-box;
    background-color: #d2267a;
    color: #fff;
    font: 10.500px/14px "Open Sans", sans-serif;
}
.keurmerk-pink b {
    font-size: 11.500px;
}
.keurmerk-pink span {
    color: #f3c0d6;
}
.keurmerk-check {
    width: 44px;
    height: 35px;
    margin-left: -2px;
}
.keurmerk-bottom {
    font: 10.500px/10px "Open Sans", sans-serif;
    color: #333;
    white-space: nowrap;
    letter-spacing: -0.3px;
}
.review-count {
    display: flex;
    flex-direction: column;
    align-items: center;
    width: 54px;
}
.review-count b {
    font-size: 22px;
    line-height: 30px;
    color: #d2267a;
}
.review-count span {
    font-size: 16px;
    line-height: 16px;
    color: #8ab45c;
}
.stars {
    display: flex;
    margin-top: 3px;
}
.star {
    width: 35px;
    height: 34px;
}
.rating-band {
    height: 42px;
    background-color: #d2267a;
}
.bubble {
    position: absolute;
    left: 12px;
    top: 104px;
    width: 309px;
    height: 86px;
    box-sizing: border-box;
    padding: 11px 14px 0 13px;
    border: 1px solid #444;
    border-radius: 12px;
    background-color: #fbf9e8;
    box-shadow: 3px 3px 10px rgba(0, 0, 0, 0.35);
    font-size: 15px;
    line-height: 16px;
}
.bubble::before {
    content: "";
    position: absolute;
    left: 249px;
    top: -8px;
    width: 14px;
    height: 14px;
    transform: rotate(45deg);
    background-color: #fbf9e8;
    border-left: 1px solid #444;
    border-top: 1px solid #444;
}
.content .bubble-text {
    margin: 0;
    font-style: italic;
    color: #111;
}
.bubble-name {
    margin-top: 3px;
    color: #d63d86;
    line-height: 18px;
}
.bubble-foot {
    display: flex;
    justify-content: space-between;
    padding-right: 6px;
    font-size: 12.500px;
    line-height: 14px;
    color: #777;
}
.bubble-date {
    font-family: "Liberation Sans", sans-serif;
}
.content .bubble-foot a {
    color: #d2267a;
    font-style: italic;
    font-size: 14px;
    margin-top: -3px;
}

.scrollbar {
    display: flex;
    flex-direction: column;
    align-items: center;
    width: 21px;
    background-color: #f1f1f1;
    flex: none;
}
.scroll-up, .scroll-down {
    width: 0;
    height: 0;
    margin: 7px 0;
    border: 4.500px solid transparent;
}
.scroll-up {
    border-bottom: 5px solid #505050;
    border-top: 0;
}
.scroll-down {
    border-top: 5px solid #505050;
    border-bottom: 0;
}
.scroll-track {
    flex: 1;
    width: 100%;
}
.scroll-thumb {
    height: 103px;
    margin: 2px 2px 0;
    background-color: #c1c1c1;
}

/* windows taskbar */
.taskbar {
    display: flex;
    align-items: center;
    height: 50px;
    background-color: #212326;
    color: #fff;
    flex: none;
}
.start {
    display: flex;
    justify-content: center;
    width: 60px;
}
.win-logo {
    width: 20px;
    height: 20px;
}
.task-search {
    display: flex;
    align-items: center;
    gap: 15px;
    width: 430px;
    height: 50px;
    padding-left: 15px;
    box-sizing: border-box;
    background-color: #333;
    border: 1px solid #555;
    border-bottom: 2px solid #555;
    font-size: 17.800px;
    color: #d4d4d4;
}
.task-search-icon {
    width: 20px;
    height: 22px;
}
.task-app {
    display: flex;
    align-items: center;
    justify-content: center;
    position: relative;
    width: 62px;
    height: 50px;
    margin-left: -0.050px;
    box-sizing: border-box;
}
.task-icon {
    width: 28px;
    height: 28px;
}
.is-open::after {
    content: "";
    position: absolute;
    left: 5px;
    right: 5px;
    bottom: 0;
    height: 3px;
    background-color: #5fc9b4;
}
.is-current {
    background-color: #54565a;
}
.is-current::after {
    left: 0;
    right: 0;
}
.is-nord {
    background-color: #a55f28;
    box-shadow: inset 0 -3px #f97b12;
}
.task-badge {
    position: absolute;
    left: 32px;
    top: 21px;
    width: 18px;
    height: 22px;
    border-radius: 50%;
    background-color: #ea0d17;
    color: #fff;
    text-align: center;
    font-size: 12px;
    line-height: 22px;
}
.tray {
    display: flex;
    align-items: center;
    margin-left: auto;
    padding-right: 23px;
}
.tray-cloud {
    width: 30px;
    height: 22px;
    margin-right: 23px;
}
.tray-icon {
    width: 17px;
    height: 15px;
    margin-right: 13px;
}
.tray-lang {
    font-size: 14.500px;
    margin-left: 1px;
}
.tray-clock {
    display: flex;
    flex-direction: column;
    align-items: center;
    width: 80px;
    margin-left: 18px;
    font-size: 14px;
    line-height: 23px;
}
.tray-notify {
    position: relative;
    width: 24px;
    height: 30px;
    margin-left: 20px;
}
.tray-note {
    width: 20px;
    height: 20px;
}
.tray-count {
    position: absolute;
    left: 5px;
    top: 7px;
    width: 24px;
    height: 24px;
    box-sizing: border-box;
    border: 1px solid #ccc;
    border-radius: 50%;
    background-color: #444;
    font-size: 13px;
    line-height: 22px;
    text-align: center;
}
```
